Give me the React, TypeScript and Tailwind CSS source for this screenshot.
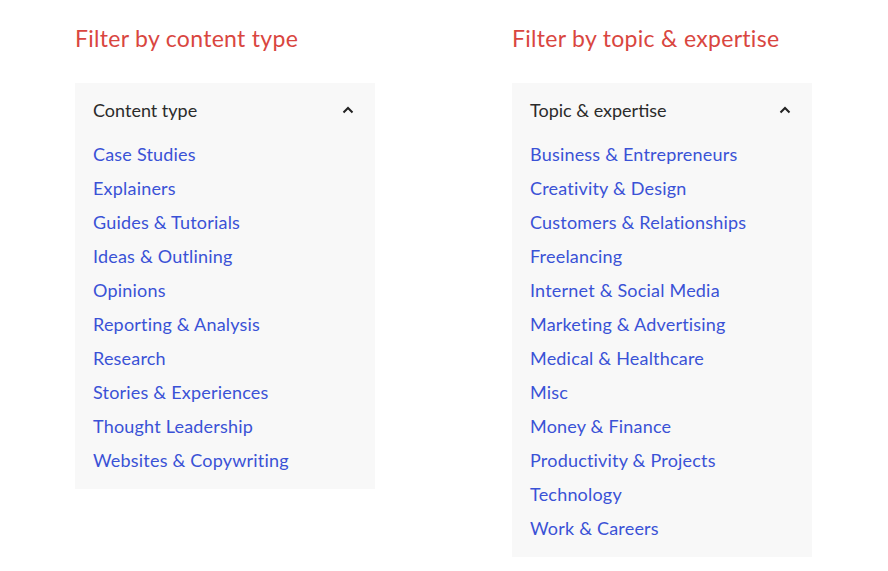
const contentTypes = [
  "Case Studies",
  "Explainers",
  "Guides & Tutorials",
  "Ideas & Outlining",
  "Opinions",
  "Reporting & Analysis",
  "Research",
  "Stories & Experiences",
  "Thought Leadership",
  "Websites & Copywriting",
];

const topics = [
  "Business & Entrepreneurs",
  "Creativity & Design",
  "Customers & Relationships",
  "Freelancing",
  "Internet & Social Media",
  "Marketing & Advertising",
  "Medical & Healthcare",
  "Misc",
  "Money & Finance",
  "Productivity & Projects",
  "Technology",
  "Work & Careers",
];

function Chevron() {
  return (
    <svg width="12" height="8" viewBox="0 0 12 8" className="text-[#222]">
      <path d="M1.5 6.5 L6 2 L10.5 6.5" fill="none" stroke="currentColor" strokeWidth="2" />
    </svg>
  );
}

function FilterBlock({ title, label, items }: { title: string; label: string; items: string[] }) {
  return (
    <div className="w-[300px]">
      <h2 className="text-[23px] leading-[28px] text-[#d9463f] tracking-[0.3px]">
        {title}
      </h2>
      <div className="mt-[31px] bg-[#f8f8f8] px-[18px] pt-[15px] pb-[12px]">
        <div className="flex items-center justify-between pr-[3px] h-[24px]">
          <span className="text-[18px] text-[#2b2b2b]">{label}</span>
          <Chevron />
        </div>
        <ul className="mt-[15px]">
          {items.map((it) => (
            <li key={it} className="h-[34px] leading-[34px] text-[18px] tracking-[0.2px] text-[#3a52d6]">
              {it}
            </li>
          ))}
        </ul>
      </div>
    </div>
  );
}

export default function App() {
  return (
    <div className="min-h-[571px] bg-white pl-[75px] pt-[24px] font-['Lato',sans-serif]">
      <div className="flex gap-[137px] items-start">
        <FilterBlock title="Filter by content type" label="Content type" items={contentTypes} />
        <FilterBlock title="Filter by topic & expertise" label="Topic & expertise" items={topics} />
      </div>
    </div>
  );
}
